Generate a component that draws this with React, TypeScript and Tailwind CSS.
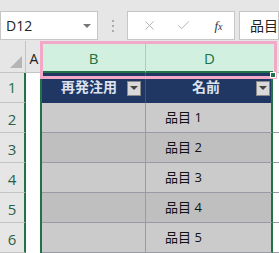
import { X, Check } from 'lucide-react'

const rows = [2, 3, 4, 5, 6]

function FilterButton() {
  return (
    <div className="flex h-[15px] w-[14px] items-center justify-center border border-[#8a8a8a] bg-[#d9d9d9]">
      <div className="h-0 w-0 border-x-[4px] border-t-[4px] border-x-transparent border-t-[#444]" />
    </div>
  )
}

export default function App() {
  const font = { fontFamily: '"Open Sans", "Noto Sans CJK JP", sans-serif' }
  return (
    <div className="relative h-[253px] w-[279px] overflow-hidden bg-white" style={font}>
      {/* formula bar */}
      <div className="flex h-[41px] items-end bg-[#e6e6e6] pb-[1px]">
        <div className="flex h-[29px] w-[100px] items-center justify-between border border-[#c6c6c6] bg-white pl-[5px] pr-[6px]">
          <span className="text-[14px] text-[#222]">D12</span>
          <div className="h-0 w-0 border-x-[4px] border-t-[4px] border-x-transparent border-t-[#777]" />
        </div>
        <div className="flex h-[29px] w-[30px] items-center justify-center">
          <span className="flex flex-col items-center gap-[3px]">
            <span className="h-[2px] w-[2px] bg-[#aaa]" />
            <span className="h-[2px] w-[2px] bg-[#aaa]" />
            <span className="h-[2px] w-[2px] bg-[#aaa]" />
          </span>
        </div>
        <div className="flex h-[29px] w-[110px] items-center border border-[#c6c6c6] bg-white">
          <X className="ml-[14px] h-[15px] w-[15px] text-[#b0b0b0]" strokeWidth={1.5} />
          <Check className="ml-[19px] h-[15px] w-[15px] text-[#b0b0b0]" strokeWidth={1.5} />
          <span
            className="ml-[23px] text-[13px] italic text-[#333]"
            style={{ fontFamily: '"Liberation Serif", serif' }}
          >
            f<span className="text-[10px]">x</span>
          </span>
        </div>
        <div className="ml-[4px] flex h-[29px] flex-1 items-center border border-[#c6c6c6] bg-white pl-[10px]">
          <span className="whitespace-nowrap text-[14px] text-[#222]">品目</span>
        </div>
      </div>

      {/* grid */}
      <div className="grid grid-cols-[26px_16px_104px_127px_6px] grid-rows-[32px_30px_30px_30px_30px_30px_30px]">
        {/* header row */}
        <div className="relative border-b border-r border-[#c4c4c4] bg-[#e6e6e6]">
          <div className="absolute bottom-[4px] right-[3px] h-0 w-0 border-b-[12px] border-l-[12px] border-b-[#b5b5b5] border-l-transparent" />
        </div>
        <div className="flex items-center justify-center border-b border-[#c4c4c4] bg-[#e6e6e6] pt-[4px] text-[14px] text-[#222]">
          A
        </div>
        <div className="flex items-center justify-center border-b-2 border-r border-b-[#217346] border-r-[#b8c8be] bg-[#d2f0df] pt-[4px] text-[15px] text-[#217346]">
          B
        </div>
        <div className="flex items-center justify-center border-b-2 border-b-[#217346] bg-[#d2f0df] pt-[4px] text-[15px] text-[#217346]">
          D
        </div>
        <div className="border-b border-[#c4c4c4] bg-[#e6e6e6]" />

        {/* row 1 */}
        <div className="flex items-center justify-center border-b border-r-2 border-b-[#c4c4c4] border-r-[#217346] bg-[#e6e6e6] text-[15px] text-[#217346]">
          1
        </div>
        <div className="border-r-2 border-[#217346] bg-white" />
        <div className="relative flex items-center justify-end border-r border-[#44546a] bg-[#203764] pr-[4px]">
          <span className="absolute left-[19px] top-[3px] text-[14px] font-bold text-[#dde3ee]">再発注用</span>
          <FilterButton />
        </div>
        <div className="relative flex items-center justify-end border-r-2 border-[#217346] bg-[#203764] pr-[1px]">
          <span className="absolute left-[46px] top-[3px] text-[14px] font-bold text-[#dde3ee]">名前</span>
          <FilterButton />
        </div>
        <div className="bg-white" />

        {rows.map((r, i) => (
          <Row key={r} n={r} dark={i % 2 === 1} />
        ))}
      </div>

      {/* pink highlight */}
      <div className="pointer-events-none absolute left-[40px] top-[41px] h-[38px] w-[237px] border-[3px] border-[#f3a8c7]" />
      {/* fill handle */}
      <div className="absolute left-[270px] top-[72px] h-[6px] w-[6px] border border-white bg-[#217346]" />
    </div>
  )
}

function Row({ n, dark }: { n: number; dark: boolean }) {
  const bg = dark ? 'bg-[#bfbfbf]' : 'bg-[#cbcbcb]'
  return (
    <>
      <div className="flex items-center justify-center border-b border-r-2 border-b-[#c4c4c4] border-r-[#217346] bg-[#e6e6e6] pt-[4px] text-[15px] text-[#2e5f46]">
        {n}
      </div>
      <div className="border-r-2 border-[#217346] bg-white" />
      <div className={`border-b border-r border-[#9a9aa6] ${bg}`} />
      <div className={`flex items-center border-b border-r-2 border-b-[#9a9aa6] border-r-[#217346] pl-[19px] text-[13px] text-[#111] ${bg}`}>
        品目 {n - 1}
      </div>
      <div className="border-b border-[#9a9aa6] bg-white" />
    </>
  )
}
